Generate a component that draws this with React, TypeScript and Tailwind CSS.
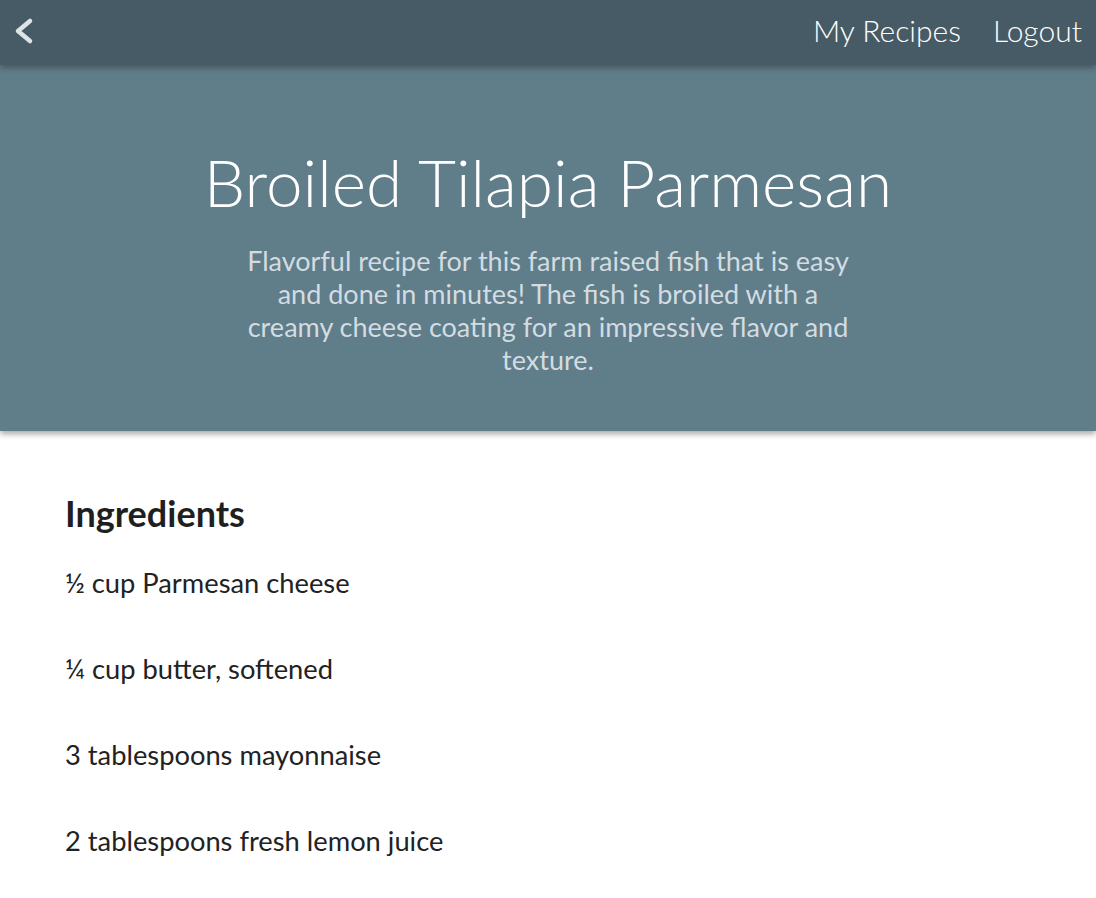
import React from 'react';

const ingredients = [
  '½ cup Parmesan cheese',
  '¼ cup butter, softened',
  '3 tablespoons mayonnaise',
  '2 tablespoons fresh lemon juice',
];

const App: React.FC = () => {
  return (
    <div className="min-h-screen bg-white font-['Lato',sans-serif] text-[#222]">
      {/* Top bar */}
      <header className="relative z-20 h-[65px] bg-[#475b66] flex items-center justify-between pl-3 pr-[14px] shadow-[0_3px_6px_rgba(0,0,0,0.3)]">
        <button className="text-[#dde3e6] -mt-1">
          <svg width="24" height="32" viewBox="0 0 24 32" fill="none">
            <path d="M18 6 L6 16 L18 26" stroke="currentColor" strokeWidth="4.5" strokeLinecap="round" strokeLinejoin="round" />
          </svg>
        </button>
        <nav className="flex items-center gap-[32px] text-white text-[30px] font-light -mt-1">
          <a>My Recipes</a>
          <a>Logout</a>
        </nav>
      </header>

      {/* Hero */}
      <section className="relative z-10 bg-[#607d8a] h-[366px] flex flex-col items-center pt-[84px] shadow-[0_3px_6px_rgba(0,0,0,0.35)]">
        <h1 className="text-white text-[65.7px] font-light leading-none">Broiled Tilapia Parmesan</h1>
        <p className="mt-[29px] w-[622px] text-center text-[#d3dce0] text-[27px] leading-[33px]">
          Flavorful recipe for this farm raised fish that is easy and done in minutes! The fish is broiled with a creamy cheese coating for an impressive flavor and texture.
        </p>
      </section>

      {/* Ingredients */}
      <main className="px-[65px] pt-[64px]">
        <h2 className="text-[36px] font-bold leading-none text-[#1f1f1f]">Ingredients</h2>
        <ul className="mt-[38px] flex flex-col gap-[58px]">
          {ingredients.map((item) => (
            <li key={item} className="text-[27.3px] leading-[28px] text-[#222]">{item}</li>
          ))}
        </ul>
      </main>
    </div>
  );
};

export default App;
